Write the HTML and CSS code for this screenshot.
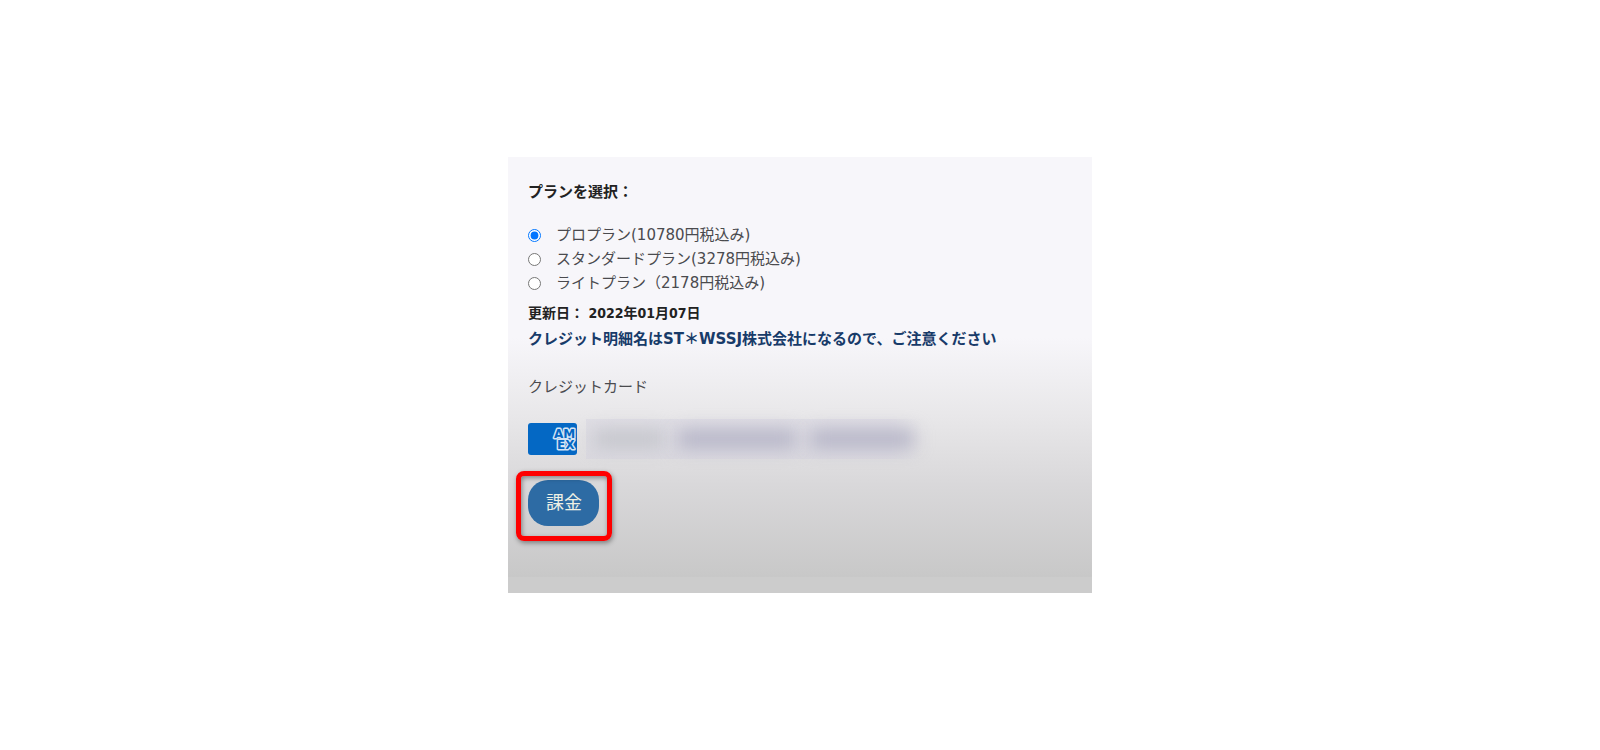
FILE: index.html
```html
<!DOCTYPE html>
<html lang="ja">
  <head>
    <meta charset="UTF-8" />
    <meta name="viewport" content="width=device-width, initial-scale=1.0" />
    <title>プランを選択</title>
    <link rel="stylesheet" href="styles.css">
  </head>
  <body>
    <main class="panel">
      <form class="plan-form">
        <fieldset class="plans">
          <legend class="plans-title">プランを選択：</legend>
          <label class="plan"><input type="radio" name="plan" value="pro" checked />プロプラン(10780円税込み)</label>
          <label class="plan"><input type="radio" name="plan" value="standard" />スタンダードプラン(3278円税込み)</label>
          <label class="plan"><input type="radio" name="plan" value="light" />ライトプラン（2178円税込み)</label>
        </fieldset>

        <p class="renewal">更新日： 2022年01月07日</p>
        <p class="notice">クレジット明細名はST＊WSSJ株式会社になるので、ご注意ください</p>

        <p class="card-label">クレジットカード</p>
        <div class="card">
          <svg class="amex" viewBox="0 0 49 32" role="img" aria-label="AMEX">
            <rect width="49" height="32" rx="3" fill="#0468c4" />
            <text class="amex-text"><tspan x="26" y="15">AM</tspan><tspan x="29" y="26">EX</tspan></text>
          </svg>
          <!-- masked card number -->
          <div class="card-number">
            <span class="mask mask-light"></span>
            <span class="mask mask-wide"></span>
            <span class="mask"></span>
          </div>
        </div>

        <div class="submit">
          <button type="submit" class="pay">課金</button>
          <span class="highlight"></span>
        </div>
      </form>
      <div class="panel-foot"></div>
    </main>
  </body>
</html>
```

FILE: styles.css
```css
body {
  margin: 0;
  min-height: 100vh;
  display: flex;
  align-items: center;
  justify-content: center;
  background: #fff;
  color: #4a4a4e;
  font-family: "DejaVu Sans", "Noto Sans CJK JP", sans-serif;
  font-size: 15px;
  line-height: 24px;
}
p {
  margin: 0;
}
.panel {
  width: 100%;
  max-width: 584px;
}
.plan-form {
  padding: 23px 20px 51px;
  background: linear-gradient(#f7f6fa 43%, #e8e7e9 62%, #d9d8da 78%, #c8c8c8);
}
.plans {
  margin: 0;
  padding: 0;
  border: 0;
  min-width: 0;
}
.plans-title {
  padding: 0;
  margin-bottom: 19px;
  color: #222;
  font-weight: bold;
}
.plan {
  display: flex;
  align-items: center;
  gap: 15px;
}
.plan input {
  width: 13px;
  height: 13px;
  margin: 0;
}
.renewal {
  margin-top: 6px;
  color: #222;
  font-family: "DejaVu Sans Condensed", "Noto Sans CJK JP", sans-serif;
  font-size: 14px;
  font-weight: bold;
}
.notice {
  margin-top: 2px;
  color: #183b69;
  font-weight: bold;
}
.card-label {
  margin-top: 24px;
}
.card {
  display: flex;
  align-items: center;
  gap: 9px;
  margin-top: 20px;
}
.amex {
  width: 49px;
  height: 32px;
}
.amex-text {
  font: bold 12px "DejaVu Sans", sans-serif;
  fill: #0468c4;
  stroke: #d4e4f4;
  stroke-width: 3px;
  stroke-linejoin: round;
  paint-order: stroke;
}
.card-number {
  display: flex;
  align-items: center;
  gap: 14px;
  flex: 0 1 320px;
  height: 40px;
  padding: 0 8px;
  background: linear-gradient(90deg, rgba(210, 208, 222, 0.4) 90%, transparent);
}
.mask {
  flex: 1;
  height: 18px;
  background: #b4b3c6;
  filter: blur(9px);
}
.mask-light {
  flex: 0 1 70px;
  background: #c4c5cb;
}
.mask-wide {
  flex: 0 1 118px;
}
.submit {
  position: relative;
  width: fit-content;
  margin-top: 21px;
}
.pay {
  display: block;
  height: 46px;
  padding: 0 17px 4px 18px;
  border: 0;
  border-radius: 20px;
  background: #2d6ba4;
  color: #eef0e4;
  font-family: inherit;
  font-size: 18px;
}
/* red frame drawn around the button */
.highlight {
  position: absolute;
  inset: -9px -13px -15px -12px;
  border: 5px solid #fe0000;
  border-radius: 8px;
  box-shadow: 1px 2px 5px rgba(0, 0, 0, 0.4), inset 1px 2px 5px rgba(0, 0, 0, 0.4);
  pointer-events: none;
}
.panel-foot {
  height: 16px;
  background: #ccc;
}
```
